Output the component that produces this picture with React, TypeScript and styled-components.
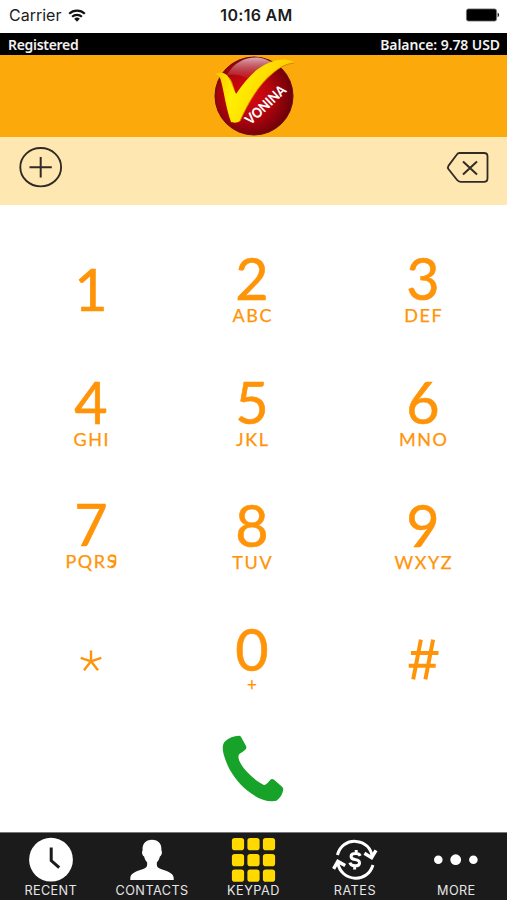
import React from "react";
import styled, { createGlobalStyle } from "styled-components";

const GlobalStyle = createGlobalStyle`
  * { box-sizing: border-box; }
  body { margin: 0; background: #fff; }
`;

const Screen = styled.div`
  width: 507px;
  height: 900px;
  display: flex;
  flex-direction: column;
  overflow: hidden;
  background: #fff;
  font-family: Inter, "Liberation Sans", sans-serif;
`;

const StatusBar = styled.header`
  height: 33px;
  flex: none;
  display: grid;
  grid-template-columns: 1fr auto 1fr;
  align-items: center;
  padding: 0 7px 3px 9px;
  font-size: 16px;
  color: #1c1c1c;
`;

const Carrier = styled.div`
  display: flex;
  align-items: center;
  gap: 7px;
`;

const Clock = styled.div`
  font-weight: 600;
  letter-spacing: 0.3px;
  padding-left: 4px;
`;

const Battery = styled.div`
  justify-self: end;
  display: flex;
`;

const AccountBar = styled.div`
  height: 22px;
  flex: none;
  display: flex;
  align-items: center;
  justify-content: space-between;
  padding: 1px 7px 0 8px;
  background: #000;
  color: #f2f2f2;
  font: 600 14px/20px "Noto Sans", sans-serif;
`;

const AccountText = styled.span<{ $spacing: number }>`
  letter-spacing: ${(p) => p.$spacing}px;
`;

const Brand = styled.div`
  height: 82px;
  flex: none;
  display: flex;
  justify-content: center;
  background: #fca90b;
`;

const NumberBar = styled.div`
  height: 68px;
  flex: none;
  display: flex;
  justify-content: space-between;
  align-items: flex-start;
  padding: 9px 17px 0 18px;
  background: #fee7b1;
`;

const PlainButton = styled.button`
  display: flex;
  padding: 0;
  border: 0;
  background: none;
`;

const Keypad = styled.div`
  flex: none;
  display: grid;
  grid-template-columns: 161px 171px 80px;
  grid-auto-rows: 123.5px;
  padding: 43px 0 0 51px;
  height: 525px;
`;

const Key = styled.button<{ $shift?: number }>`
  width: 80px;
  height: 90px;
  display: flex;
  flex-direction: column;
  align-items: center;
  padding: ${(p) => p.$shift ?? 5}px 0 0;
  border: 0;
  background: none;
  color: #ff9408;
  font-family: Lato, sans-serif;
`;

const Digit = styled.span`
  font-size: 57.5px;
  line-height: 50px;
  font-weight: 400;
  -webkit-text-stroke: 0.6px #ff9408;
`;

const Letters = styled.span`
  position: relative;
  font-size: 18px;
  line-height: 20px;
  letter-spacing: 1.6px;
  margin: 2px -1.6px 0 0;
  white-space: nowrap;
  -webkit-text-stroke: 0.25px #ff9408;
`;

const Hook = styled.svg`
  position: absolute;
  right: 1px;
  top: 3px;
`;

const Plus = styled.span`
  font-size: 17px;
  line-height: 18px;
  margin-top: 2px;
  -webkit-text-stroke: 0.25px #ff9408;
`;

const CallRow = styled.div`
  flex: 1;
  display: flex;
  justify-content: center;
  align-items: flex-start;
  padding: 5px 2px 0 0;
`;

const TabBar = styled.nav`
  height: 68px;
  flex: none;
  display: grid;
  grid-template-columns: repeat(5, 1fr);
  border-top: 1px solid #777;
  background: #1b1b1b;
`;

const Tab = styled.button`
  display: flex;
  flex-direction: column;
  align-items: center;
  padding: 4px 0 0;
  border: 0;
  background: none;
  color: #e6e6e6;
  font: 12.7px/16px Inter, "Liberation Sans", sans-serif;
`;

const TabLabel = styled.span<{ $spacing: number }>`
  letter-spacing: ${(p) => p.$spacing}px;
`;

const WifiIcon = () => (
  <svg width="18" height="13" viewBox="0 0 18 13" fill="none" stroke="#111" strokeWidth="2.2">
    <path d="M1.2 4.7a11.2 11.2 0 0 1 15.6 0" />
    <path d="M4.1 7.8a7 7 0 0 1 9.8 0" />
    <path d="M9 12.7 6.2 9.8a4 4 0 0 1 5.6 0z" fill="#111" stroke="none" />
  </svg>
);

const BatteryIcon = () => (
  <svg width="35" height="14" viewBox="0 0 35 14">
    <rect x="1.4" y="0.9" width="30.2" height="12.2" rx="2" fill="#000" stroke="#777" strokeWidth="0.8" />
    <path d="M32.6 4.8c2 .6 2 3.8 0 4.4z" fill="#222" />
  </svg>
);

const Logo = () => (
  <svg width="82" height="82" viewBox="0 0 82 82">
    <defs>
      <radialGradient id="ball" cx="0.42" cy="0.48" r="0.6">
        <stop offset="0" stopColor="#e00a12" />
        <stop offset="0.5" stopColor="#b5050d" />
        <stop offset="1" stopColor="#650009" />
      </radialGradient>
      <linearGradient id="gloss" x1="0" y1="0" x2="0" y2="1">
        <stop offset="0" stopColor="#e0aab4" />
        <stop offset="1" stopColor="#bd3742" stopOpacity="0.1" />
      </linearGradient>
      <linearGradient id="tick" x1="0" y1="0" x2="1" y2="0.3">
        <stop offset="0" stopColor="#f7b900" />
        <stop offset="0.35" stopColor="#fff000" />
        <stop offset="1" stopColor="#ffc800" />
      </linearGradient>
    </defs>
    <circle cx="41" cy="41" r="39" fill="url(#ball)" stroke="#680c16" />
    <path d="M14 20C22 6 35 1 48 3c8 2 13 5 17 9-12 2-20 8-26 15-8-7-17-8-25-7z" fill="url(#gloss)" />
    <path d="M16 22c4 4 5 12 7 17l2 2-3 8z" fill="#d98300" />
    <path
      d="M1.5 19C7 17 13 17 16 23c3 5 4 11 7 16C30 29 37 20 45 14 56 6 69 2 79 6q3 1 2 2C72 9 66 13 60 18 46 29 35 48 27 66c-2 2-7 2-9 1C13 53 11 37 8 26 7 21 5 20 1.5 19z"
      fill="url(#tick)"
    />
    <path d="M81 8C72 9 66 13 60 18 46 29 35 48 27 66" fill="none" stroke="#d98300" />
    <text
      transform="translate(37.5 70.5) rotate(-43)"
      fill="#fff"
      fontFamily="Lato, sans-serif"
      fontWeight="900"
      fontSize="14"
      textLength="50"
      lengthAdjust="spacingAndGlyphs"
    >
      VONINA
    </text>
  </svg>
);

const AddIcon = () => (
  <svg width="45" height="42" viewBox="0 0 45 42" fill="none" stroke="#302b24">
    <ellipse cx="22.7" cy="21.2" rx="20.4" ry="19.2" strokeWidth="1.9" />
    <path d="M11.5 21.2h22.3M22.7 11v20.5" strokeWidth="2" />
  </svg>
);

const EraseIcon = () => (
  <svg width="45" height="42" viewBox="0 0 45 42" fill="none" stroke="#302b24" strokeLinejoin="round">
    <path d="M14.5 7H39q3.5 0 3.5 3.2v22q0 3.6-3.5 3.6H15.5q-2 0-3.4-1.8L3.4 23q-1-1.6 0-3.1l8.3-11.2Q12.8 7 14.5 7z" strokeWidth="1.8" />
    <path d="m18 15.5 14 13m0-13-14 13" strokeWidth="2" />
  </svg>
);

const AsteriskIcon = () => (
  <svg width="24" height="24" viewBox="0 0 24 24" stroke="#ff9408" strokeWidth="2.4">
    <path d="M12 1.5v10.8M1.7 8.8 12 12.3M22.3 8.8 12 12.3M5 21.3l7-9M19 21.3l-7-9" />
  </svg>
);

const HashIcon = () => (
  <svg width="31" height="41" viewBox="0 0 31 41" fill="none" stroke="#ff9408" strokeWidth="4">
    <path d="M12.9.7 5.2 40.3M25.1.7l-7.7 39.6M3 14h27.5M.7 26.7h27" />
  </svg>
);

const PhoneIcon = () => (
  <svg width="62" height="67" viewBox="0 0 63 68">
    <path
      d="M3 6.5C7 2.5 12 .7 17.2.6q1.4 0 2.2 1.3l5 9.2q1 2-.5 3.6c-2.3 2.2-4.8 3.3-6.7 5.2-2.2 3.5 3 12.4 8.8 18.2 5.4 5.6 11 10 16.1 12.4 2.2.9 3.7-1 7-5q1.6-1.7 3.5-.2l8.4 7.2q1.5 1.4 1.2 3c-.6 4.3-2.7 8-6.8 11.2C46 68.8 34.8 64 25.3 56.2 14.2 46.8 6.2 34.7 2.6 22.6.4 15.8-.2 9.8 3 6.5z"
      fill="#17a329"
    />
  </svg>
);

const RecentIcon = () => (
  <svg width="46" height="46" viewBox="0 0 46 46">
    <circle cx="23" cy="22.7" r="21.9" fill="#fff" />
    <path d="M23.2 10.5v13l8 7.2" fill="none" stroke="#1b1b1b" strokeWidth="3" />
  </svg>
);

const ContactIcon = () => (
  <svg width="46" height="46" viewBox="0 0 46 46">
    <path
      d="M23 2.8c6.5 0 10 4.5 9.4 10.6 1.1 1.1.5 4.8-1.5 6.2-.8 3-1.6 4.4-3 5.7-.3 3.3.1 5.1 2.8 6.2 4.3 1.9 14 3.8 14 9.4v2.2H1.3v-2.2c0-5.6 9.7-7.5 14-9.4 2.7-1.1 3.1-2.9 2.8-6.2-1.4-1.3-2.2-2.7-3-5.7-2-1.4-2.6-5.1-1.5-6.2C13 7.3 16.5 2.8 23 2.8z"
      fill="#fff"
    />
  </svg>
);

const KeypadIcon = () => (
  <svg width="46" height="46" viewBox="0 0 46 46" fill="#ffd900">
    {[1, 17, 32.5].map((y) =>
      [1.9, 17.4, 32.9].map((x) => <rect key={`${x}-${y}`} x={x} y={y} width="12.2" height="12.2" rx="2.8" />)
    )}
  </svg>
);

const RatesIcon = () => (
  <svg width="46" height="46" viewBox="0 0 46 46" fill="none" stroke="#fff" strokeWidth="3">
    <path d="M5.4 18C8 8.6 15.3 3.9 23.8 4.4 33.4 5 39.3 11.5 40.2 20" />
    <path d="m32.4 16.3 7.2 4.4 4.4-7.4" strokeWidth="3.4" />
    <path d="M41 28c-2.8 8.8-9.7 13.7-18 13.2C13.7 40.6 7.1 34.3 6 26" />
    <path d="m1.6 31.8 4.2-7.4 7.4 4.2" strokeWidth="3.4" />
    <path d="M28.2 18.9c-.7-1.7-2.4-2.4-4.6-2.4-6 0-5.8 5.2-.7 6 6.6.9 5.7 6.4.1 6.3-2.8 0-4.6-1.1-5.1-3.1M24.2 13v3.5M22.6 28.8v3.6" />
  </svg>
);

const MoreIcon = () => (
  <svg width="46" height="46" viewBox="0 0 46 46" fill="#fff">
    <circle cx="5.3" cy="22.7" r="4.3" />
    <circle cx="22.7" cy="22.7" r="5.4" />
    <circle cx="40.4" cy="22.7" r="4.3" />
  </svg>
);

const keys = [
  { digit: "1", shift: 16 },
  { digit: "2", letters: "ABC" },
  { digit: "3", letters: "DEF" },
  { digit: "4", letters: "GHI" },
  { digit: "5", letters: "JKL" },
  { digit: "6", letters: "MNO" },
  { digit: "7", letters: "PQRS", shift: 4 },
  { digit: "8", letters: "TUV" },
  { digit: "9", letters: "WXYZ" },
];

const tabs = [
  { label: "RECENT", Icon: RecentIcon, spacing: 0.35 },
  { label: "CONTACTS", Icon: ContactIcon, spacing: 0.45 },
  { label: "KEYPAD", Icon: KeypadIcon, spacing: 0.5 },
  { label: "RATES", Icon: RatesIcon, spacing: 0.5 },
  { label: "MORE", Icon: MoreIcon, spacing: 0.4 },
];

export default function App() {
  return (
    <Screen>
      <GlobalStyle />
      <StatusBar>
        <Carrier>Carrier <WifiIcon /></Carrier>
        <Clock>10:16 AM</Clock>
        <Battery><BatteryIcon /></Battery>
      </StatusBar>
      <AccountBar>
        <AccountText $spacing={-0.3}>Registered</AccountText>
        <AccountText $spacing={-0.08}>Balance: 9.78 USD</AccountText>
      </AccountBar>
      <Brand><Logo /></Brand>
      <NumberBar>
        <PlainButton aria-label="Add contact"><AddIcon /></PlainButton>
        <PlainButton aria-label="Erase"><EraseIcon /></PlainButton>
      </NumberBar>
      <Keypad>
        {keys.map(({ digit, letters, shift }) => (
          <Key key={digit} $shift={shift}>
            <Digit>{digit}</Digit>
            {letters && (
              <Letters>
                {letters}
                {digit === "7" && (
                  <Hook width="8" height="14" viewBox="0 0 8 14" fill="none" stroke="#ff9408" strokeWidth="1.6">
                    <path d="M1 1.2h3.5Q6.5 1.5 6.5 4v5Q6 12 2 12.5M1 7h5" />
                  </Hook>
                )}
              </Letters>
            )}
          </Key>
        ))}
        <Key $shift={30} aria-label="Star"><AsteriskIcon /></Key>
        <Key><Digit>0</Digit><Plus>+</Plus></Key>
        <Key $shift={20} aria-label="Hash"><HashIcon /></Key>
      </Keypad>
      <CallRow>
        <PlainButton aria-label="Call"><PhoneIcon /></PlainButton>
      </CallRow>
      <TabBar>
        {tabs.map(({ label, Icon, spacing }) => (
          <Tab key={label}>
            <Icon />
            <TabLabel $spacing={spacing}>{label}</TabLabel>
          </Tab>
        ))}
      </TabBar>
    </Screen>
  );
}
